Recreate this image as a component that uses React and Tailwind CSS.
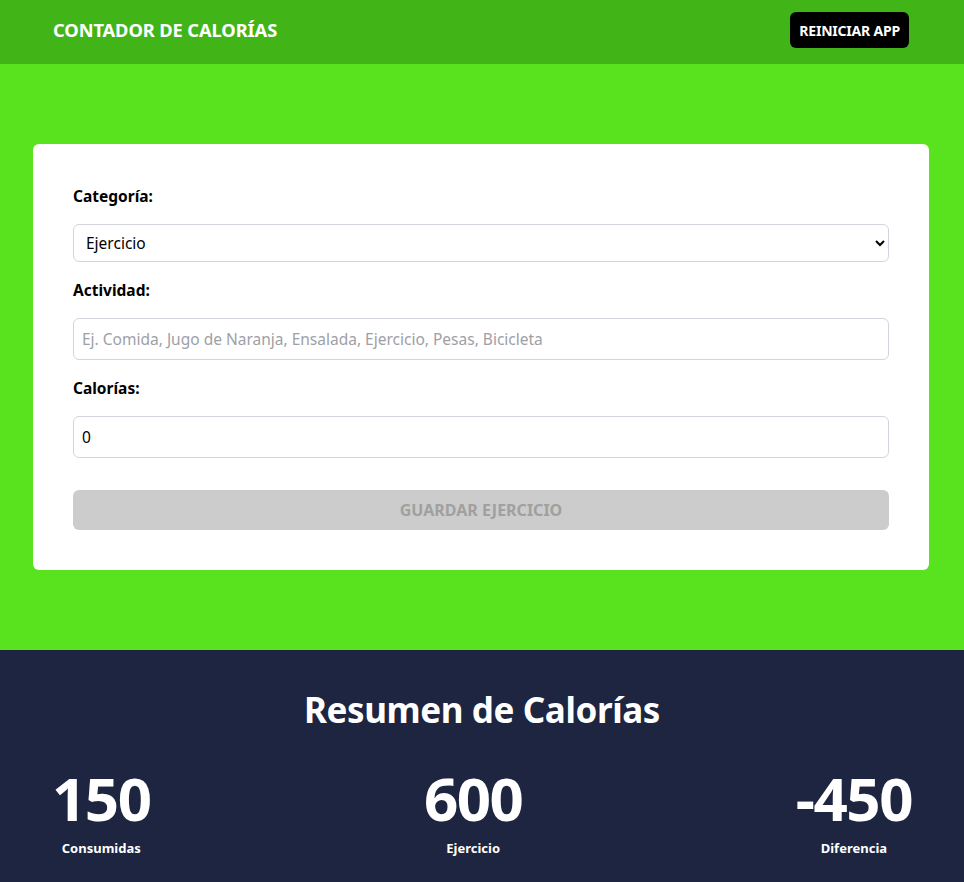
import React, { useState } from "react";

export default function App() {
  const [cat, setCat] = useState("2");
  const font = { fontFamily: '"Noto Sans", "Open Sans", sans-serif' };
  return (
    <div className="min-h-[882px] flex flex-col" style={font}>
      <header className="bg-[#41b518] h-16 flex items-center justify-between pl-[53px] pr-[55px] pb-1">
        <h1 className="text-white font-bold text-[18.3px] uppercase tracking-[-0.1px]">Contador de Calorías</h1>
        <button className="bg-black text-white font-bold text-[14px] uppercase rounded-md h-9 px-[9px] tracking-[-0.2px]">Reiniciar App</button>
      </header>
      <section className="bg-[#58e31e] py-20 px-[33px]">
        <form className="bg-white rounded-md max-w-[896px] px-10 pt-10 pb-10 flex flex-col">
          <label className="font-bold text-[15.5px] text-black leading-6">Categoría:</label>
          <select
            value={cat}
            onChange={(e) => setCat(e.target.value)}
            className="mt-4 h-[38px] border border-[#d4d4dc] rounded-md px-2 text-[15.5px] bg-white text-black"
          >
            <option value="1">Comida</option>
            <option value="2">Ejercicio</option>
          </select>
          <label className="font-bold text-[15.5px] text-black leading-6 mt-4">Actividad:</label>
          <input
            type="text"
            placeholder="Ej. Comida, Jugo de Naranja, Ensalada, Ejercicio, Pesas, Bicicleta"
            className="mt-4 h-[42px] border border-[#d4d4dc] rounded-md px-2 text-[15.5px] placeholder:text-[#9ea0a6] outline-none"
          />
          <label className="font-bold text-[15.5px] text-black leading-6 mt-4">Calorías:</label>
          <input
            type="number"
            defaultValue={0}
            className="mt-4 h-[42px] border border-[#d4d4dc] rounded-md px-2 text-[15.5px] outline-none"
          />
          <button
            type="button"
            disabled
            className="mt-8 h-10 bg-[#cccccc] text-[#a0a0a0] font-bold uppercase text-[16px] rounded-md"
          >
            Guardar Ejercicio
          </button>
        </form>
      </section>
      <section className="bg-[#1d2540] flex-1 pt-[38px] pb-6">
        <h2 className="text-white font-bold text-[35px] text-center leading-[44px] tracking-[-0.4px]">Resumen de Calorías</h2>
        <div className="max-w-[860px] mx-auto flex justify-between mt-[38px]">
          {[
            ["150", "Consumidas"],
            ["600", "Ejercicio"],
            ["-450", "Diferencia"],
          ].map(([n, l]) => (
            <div key={l} className="flex flex-col items-center text-white">
              <span className="font-bold text-[60px] leading-[56px] tracking-[-1.5px]">{n}</span>
              <span className="font-bold text-[13px] leading-5 mt-3">{l}</span>
            </div>
          ))}
        </div>
      </section>
    </div>
  );
}
